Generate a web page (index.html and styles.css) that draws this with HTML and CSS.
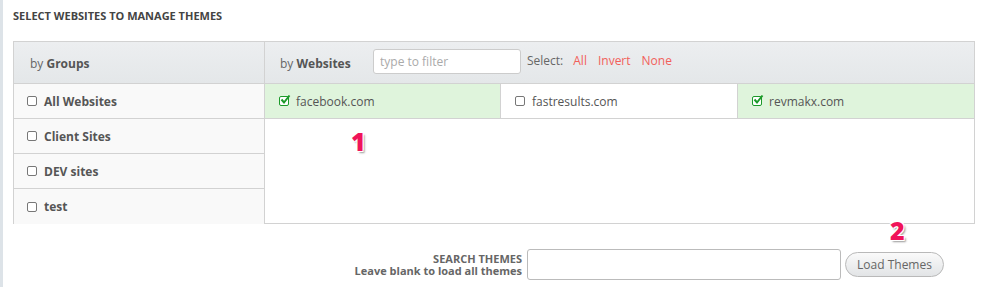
FILE: index.html
```html
<!DOCTYPE html>
<html lang="en">
<head>
    <meta charset="UTF-8">
    <title>Manage Themes</title>
    <link rel="stylesheet" href="styles.css">
</head>
<body>
    <div class="page">
        <h3 class="title">Select websites to manage themes</h3>

        <div class="chooser">
            <div class="groups">
                <div class="head"><span class="by">by <b>Groups</b></span></div>
                <div class="group"><span class="cb"></span>All Websites</div>
                <div class="group"><span class="cb"></span>Client Sites</div>
                <div class="group"><span class="cb"></span>DEV sites</div>
                <div class="group"><span class="cb"></span>test</div>
            </div>
            <div class="sites">
                <div class="head">
                    <span class="by by-sites">by <b>Websites</b></span>
                    <input type="text" class="filter" placeholder="type to filter">
                    <span class="select">Select:</span>
                    <a class="pick">All</a>
                    <a class="pick">Invert</a>
                    <a class="pick">None</a>
                </div>
                <div class="site-list">
                    <div class="site on"><span class="cb"><svg viewBox="0 0 12 12" width="12" height="12"><path d="M2.5 5.5 L5 8.5 L10.5 1.5" fill="none" stroke="#1c9a2a" stroke-width="2"/></svg></span>facebook.com</div>
                    <div class="site"><span class="cb"></span>fastresults.com</div>
                    <div class="site on"><span class="cb"><svg viewBox="0 0 12 12" width="12" height="12"><path d="M2.5 5.5 L5 8.5 L10.5 1.5" fill="none" stroke="#1c9a2a" stroke-width="2"/></svg></span>revmakx.com</div>
                </div>
                <span class="step step-one">1</span>
            </div>
        </div>

        <div class="search">
            <div class="search-label">
                <div class="search-title">SEARCH THEMES</div>
                <div class="search-hint">Leave blank to load all themes</div>
            </div>
            <input type="text" class="search-box">
            <button type="button" class="load">Load Themes</button>
            <span class="step step-two">2</span>
        </div>
    </div>
</body>
</html>
```

FILE: styles.css
```css
body {
    margin: 0;
    font-family: "Open Sans", Arial, sans-serif;
    background: #fff;
    color: #555;
}
.page {
    border-left: 3px solid #dde3e8;
    padding: 10px 7px 0 10px;
    height: 287px;
    box-sizing: border-box;
}
.title {
    margin: 0 0 19px;
    font-size: 11px;
    line-height: 12px;
    text-transform: uppercase;
    font-weight: 700;
    color: #444;
}
.chooser {
    display: grid;
    grid-template-columns: 251px 1fr;
    border: 1px solid #d2d2d2;
    width: 960px;
    height: 181px;
}
.head {
    height: 42px;
    box-sizing: border-box;
    border-bottom: 1px solid #d2d2d2;
    background: linear-gradient(#eceef0, #e4e7e9);
    display: flex;
    align-items: center;
    font-size: 12px;
    color: #666;
}
.head b {
    color: #555;
}
.groups {
    border-right: 1px solid #d2d2d2;
    background: #f9f9f9;
}
.groups .head {
    padding-left: 16px;
}
.by {
    padding-top: 1px;
}
.group {
    height: 35px;
    box-sizing: border-box;
    border-bottom: 1px solid #d2d2d2;
    display: flex;
    align-items: center;
    padding-left: 13px;
    font-size: 12px;
    font-weight: 700;
    color: #555;
}
.group:last-child {
    border-bottom: none;
}
.cb {
    display: inline-block;
    width: 8px;
    height: 8px;
    border: 1px solid #777;
    border-radius: 2px;
    margin-right: 7px;
    position: relative;
    background: #fff;
}
.cb svg {
    position: absolute;
    left: -1px;
    top: -3px;
}
.on .cb {
    border-color: #1c9a2a;
}
.sites {
    position: relative;
}
.sites .head {
    padding-left: 15px;
}
.by-sites {
    width: 93px;
}
.filter {
    width: 148px;
    height: 25px;
    box-sizing: border-box;
    border: 1px solid #ccc;
    border-radius: 3px;
    padding: 0 6px;
    font-family: inherit;
    font-size: 12px;
    margin-top: -3px;
    margin-right: 6px;
}
.filter::placeholder {
    color: #aaa;
}
.select {
    margin-right: 10px;
    margin-top: -4px;
}
.pick {
    color: #f2605a;
    margin-right: 11px;
    margin-top: -4px;
}
.site-list {
    display: grid;
    grid-template-columns: 236px 237px 1fr;
    border-bottom: 1px solid #d2d2d2;
}
.site {
    height: 34px;
    display: flex;
    align-items: center;
    padding-left: 14px;
    font-size: 12px;
    color: #555;
    border-right: 1px solid #d2d2d2;
}
.site:last-child {
    border-right: none;
}
.site.on {
    background: #dff4dc;
}
.step {
    position: absolute;
    font-family: "Open Sans", Arial, sans-serif;
    font-weight: 800;
    font-size: 25px;
    line-height: 25px;
    color: #f0145a;
    text-shadow: -1px -1px 0 #fff, 1px -1px 0 #fff, -1px 1px 0 #fff, 1px 1px 0 #fff, 2px 2px 2px #999;
}
.step-one {
    left: 86px;
    top: 87px;
}
.search {
    position: relative;
    display: flex;
    align-items: center;
    margin-top: 25px;
}
.search-label {
    width: 509px;
    text-align: right;
    font-size: 11px;
    line-height: 12px;
    font-weight: 700;
    color: #666;
    margin-right: 5px;
}
.search-box {
    width: 314px;
    height: 31px;
    box-sizing: border-box;
    border: 1px solid #bbb;
    border-radius: 3px;
    margin-right: 4px;
}
.load {
    width: 99px;
    height: 25px;
    border: 1px solid #b9b9b9;
    border-radius: 13px;
    background: linear-gradient(#fafafa, #e2e4e6);
    font-family: inherit;
    font-size: 12px;
    color: #666;
    padding: 0;
}
.step-two {
    left: 877px;
    top: -31px;
}
```
